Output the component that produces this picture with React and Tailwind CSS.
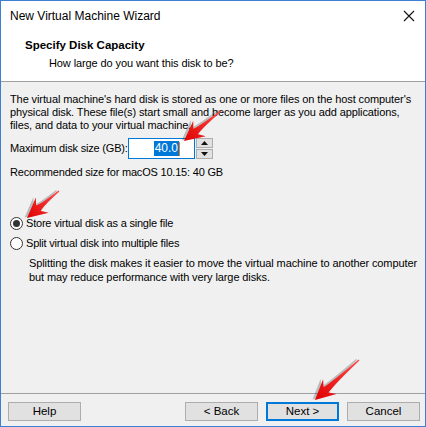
import { useState } from "react";

function Arrow({ x1, y1, x2, y2, id }) {
  const dx = x2 - x1;
  const dy = y2 - y1;
  const L = Math.sqrt(dx * dx + dy * dy);
  const ang = (Math.atan2(dy, dx) * 180) / Math.PI;
  const d = `M0 -0.7 Q${L * 0.5} -1.2 ${L - 15} -3.6 L${L - 20} -10 L${L} 0 L${L - 20} 10 L${L - 15} 3.6 Q${L * 0.5} 1.6 0 0.7 Z`;
  return (
    <g transform={`translate(${x1} ${y1}) rotate(${ang})`}>
      <path d={d} fill="rgba(0,0,0,0.22)" transform="translate(1.5 2)" />
      <path d={d} fill={`url(#${id})`} />
    </g>
  );
}

export default function App() {
  const [size, setSize] = useState("40.0");
  const [mode, setMode] = useState("single");

  const font = { fontFamily: '"Liberation Sans", Arial, sans-serif' };

  return (
    <div className="relative w-[426px] h-[427px] bg-[#f0f0f0] border border-[#3d7fd3] flex flex-col text-black text-[11px] tracking-[-0.2px]" style={font}>
      {/* title bar */}
      <div className="h-[30px] bg-white flex items-center justify-between pl-[9px] pr-[8px]">
        <span className="text-[12px] tracking-normal leading-none">New Virtual Machine Wizard</span>
        <svg width="12" height="12" viewBox="0 0 12 12" className="mr-[2px]">
          <path d="M1 1 L11 11 M11 1 L1 11" stroke="#111" strokeWidth="1.1" />
        </svg>
      </div>

      {/* header */}
      <div className="h-[51px] bg-white border-b border-[#a0a0a0] pt-[6px]">
        <div className="pl-[24px] font-bold text-[11.5px] tracking-normal leading-[16px]">Specify Disk Capacity</div>
        <div className="pl-[48px] tracking-[-0.1px] leading-[16px] mt-[2px]">How large do you want this disk to be?</div>
      </div>

      {/* body */}
      <div className="flex-1 pl-[9px] pr-[6px] pt-[11px]">
        <p className="leading-[13px] tracking-[-0.1px]">
          The virtual machine's hard disk is stored as one or more files on the host computer's physical disk. These file(s) start small and become larger as you add applications, files, and data to your virtual machine.
        </p>

        <div className="flex items-center mt-[6px] h-[21px]">
          <span className="w-[118px] whitespace-nowrap">Maximum disk size (GB):</span>
          <div className="w-[67px] h-[21px] border border-[#0078d7] bg-white flex items-center justify-end pr-[14px]">
            <span className="bg-[#0078d7] text-white text-[12px] tracking-normal leading-[15px] px-[1px]">{size}</span>
            <span className="w-px h-[14px] bg-[#e8811a]" />
          </div>
          <div className="ml-[1px] w-[17px] h-[21px] flex flex-col gap-px">
            <button onClick={() => setSize((Number(size) + 1).toFixed(1))} className="flex-1 bg-[#e1e1e1] border border-[#adadad] flex items-center justify-center">
              <svg width="7" height="4" viewBox="0 0 7 4"><path d="M0 4 L3.5 0 L7 4 Z" fill="#111" /></svg>
            </button>
            <button onClick={() => setSize((Number(size) - 1).toFixed(1))} className="flex-1 bg-[#e1e1e1] border border-[#adadad] flex items-center justify-center">
              <svg width="7" height="4" viewBox="0 0 7 4"><path d="M0 0 L3.5 4 L7 0 Z" fill="#111" /></svg>
            </button>
          </div>
        </div>

        <div className="mt-[7px] leading-[13px]">Recommended size for macOS 10.15: 40 GB</div>

        <label className="mt-[36px] flex items-center h-[16px] cursor-default" onClick={() => setMode("single")}>
          <span className="w-[13px] h-[13px] rounded-full border border-[#333] bg-white flex items-center justify-center">
            {mode === "single" && <span className="w-[7px] h-[7px] rounded-full bg-[#333]" />}
          </span>
          <span className="ml-[3px]">Store virtual disk as a single file</span>
        </label>
        <label className="mt-[4px] flex items-center h-[16px] cursor-default" onClick={() => setMode("split")}>
          <span className="w-[13px] h-[13px] rounded-full border border-[#333] bg-white flex items-center justify-center">
            {mode === "split" && <span className="w-[7px] h-[7px] rounded-full bg-[#333]" />}
          </span>
          <span className="ml-[3px]">Split virtual disk into multiple files</span>
        </label>
        <p className="mt-[5px] pl-[19px] leading-[14px] tracking-[-0.1px]">
          Splitting the disk makes it easier to move the virtual machine to another computer but may reduce performance with very large disks.
        </p>
      </div>

      {/* footer */}
      <div className="h-[33px] border-t border-[#a0a0a0] flex items-start pt-[8px] pl-[7px] text-[11.5px] tracking-normal">
        <button className="w-[73px] h-[19px] bg-[#e1e1e1] border border-[#adadad] leading-none">Help</button>
        <button className="ml-[104px] w-[73px] h-[19px] bg-[#e1e1e1] border border-[#adadad] leading-none">&lt; Back</button>
        <button className="ml-[8px] w-[73px] h-[19px] bg-[#e1e1e1] border-2 border-[#0078d7] leading-none">Next &gt;</button>
        <button className="ml-[8px] w-[73px] h-[19px] bg-[#e1e1e1] border border-[#adadad] leading-none">Cancel</button>
      </div>

      {/* annotation arrows */}
      <svg className="absolute left-[-1px] top-[-1px] pointer-events-none" width="426" height="427" viewBox="0 0 426 427">
        <defs>
          <linearGradient id="ra" x1="0" y1="0" x2="1" y2="0">
            <stop offset="0" stopColor="#ff4a4a" />
            <stop offset="1" stopColor="#e00000" />
          </linearGradient>
        </defs>
        <Arrow id="ra" x1={221} y1={111} x2={184} y2={141} />
        <Arrow id="ra" x1={59} y1={191} x2={27} y2={218} />
        <Arrow id="ra" x1={359} y1={360} x2={315} y2={400} />
      </svg>
    </div>
  );
}
